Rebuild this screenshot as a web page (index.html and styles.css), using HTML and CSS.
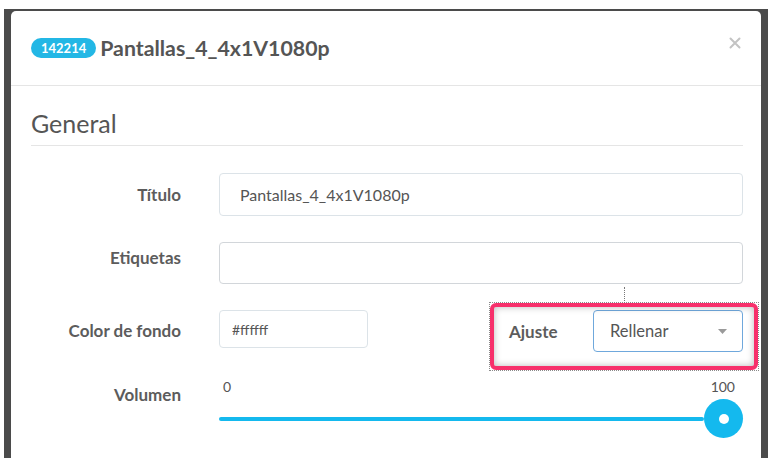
FILE: index.html
```html
<!doctype html>
<html lang="es">
  <head>
    <meta charset="UTF-8" />
    <meta name="viewport" content="width=device-width, initial-scale=1.0" />
    <title>Pantallas_4_4x1V1080p</title>
    <link rel="stylesheet" href="styles.css">
  </head>
  <body>
    <div class="Screen">
      <div class="Modal">
        <header class="Modal-header">
          <span class="Badge">142214</span>
          <h4 class="Modal-title">Pantallas_4_4x1V1080p</h4>
          <button class="Close" type="button" aria-label="Cerrar">
            <svg width="12" height="12" viewBox="0 0 12 12">
              <path d="M1.5 1.5 L10.5 10.5 M10.5 1.5 L1.5 10.5" stroke="#c3c3c3" stroke-width="2" stroke-linecap="round" fill="none" />
            </svg>
          </button>
        </header>

        <div class="Modal-body">
          <h3 class="Section-title">General</h3>

          <form class="Form">
            <div class="Field">
              <label class="Field-label">Título</label>
              <input class="Input" type="text" value="Pantallas_4_4x1V1080p" />
            </div>

            <div class="Field Field--top">
              <label class="Field-label">Etiquetas</label>
              <input class="Input Input--tags" type="text" value="" />
            </div>

            <div class="Field">
              <label class="Field-label">Color de fondo</label>
              <div class="Split">
                <input class="Input Input--color" type="text" value="#ffffff" />
                <div class="Fit">
                  <span class="Fit-label">Ajuste</span>
                  <div class="Select">
                    <span>Rellenar</span>
                    <svg width="9" height="5" viewBox="0 0 9 5">
                      <path d="M0 0 H9 L4.5 5 Z" fill="#9a9a9a" />
                    </svg>
                  </div>
                  <div class="Mark"><div class="Mark-frame"></div></div>
                </div>
              </div>
            </div>

            <div class="Field Field--slider">
              <label class="Field-label">Volumen</label>
              <div class="Slider">
                <div class="Slider-scale">
                  <span>0</span>
                  <span>100</span>
                </div>
                <div class="Slider-track">
                  <div class="Slider-fill"></div>
                  <div class="Slider-thumb"></div>
                </div>
              </div>
            </div>
          </form>
        </div>
      </div>
    </div>
  </body>
</html>
```

FILE: styles.css
```css
:root {
  --color-text: #555555;
  --color-label: #5c5c5c;
  --color-info: #23b7e5;
  --color-slider: #14b9ee;
  --color-line: #e5e5e5;
  --color-border: #dce3e8;
  --color-mark: #f7306b;
}

body {
  margin: 0;
  font-family: Lato, "Open Sans", sans-serif;
  color: var(--color-text);
  background-color: #fff;
}

.Screen {
  box-sizing: border-box;
  height: 449px;
  margin: 9px 6px 0 4px;
  padding: 2px 7px 0;
  overflow: hidden;
  background-color: #4b4b4b;
}

.Modal {
  height: 100%;
  border-radius: 5px 5px 0 0;
  background-color: #fff;
}

.Modal-header {
  display: flex;
  align-items: center;
  height: 74px;
  padding: 0 20px;
  border-bottom: 1px solid var(--color-line);
}

.Badge {
  padding: 0 10px;
  border-radius: 10px;
  font-size: 13px;
  font-weight: 700;
  line-height: 20px;
  color: #fff;
  background-color: var(--color-info);
}

.Modal-title {
  flex: 1;
  margin: 0 0 0 4px;
  font-size: 21.3px;
  font-weight: 700;
  color: var(--color-text);
}

.Close {
  align-self: flex-start;
  width: 12px;
  height: 12px;
  margin-top: 26px;
  padding: 0;
  border: 0;
  background: none;
}

.Close svg {
  display: block;
}

.Modal-body {
  padding: 23px 18px 0 20px;
}

.Section-title {
  margin: 0;
  padding-bottom: 7px;
  border-bottom: 1px solid var(--color-line);
  font-size: 25px;
  font-weight: 400;
  line-height: 29px;
}

.Form {
  display: flex;
  flex-direction: column;
  gap: 26px;
  margin-top: 27px;
}

.Field {
  display: grid;
  grid-template-columns: 150px 1fr;
  column-gap: 38px;
  align-items: center;
}

.Field-label {
  text-align: right;
  font-size: 17px;
  font-weight: 700;
  line-height: 20px;
  color: var(--color-label);
}

.Field--top,
.Field--slider {
  align-items: start;
}

.Field--top .Field-label {
  padding-top: 6px;
}

.Field--slider .Field-label {
  padding-top: 7px;
}

.Input {
  box-sizing: border-box;
  width: 100%;
  height: 43px;
  padding: 0 20px;
  border: 1px solid var(--color-border);
  border-radius: 4px;
  font-family: inherit;
  font-size: 16px;
  color: var(--color-text);
  background-color: #fff;
  outline: none;
}

.Input--tags {
  height: 42px;
  border-color: #d2d6da;
}

.Input--color {
  width: 149px;
  height: 38px;
  padding: 0 12px;
  font-size: 14px;
}

.Split {
  display: flex;
  justify-content: space-between;
  align-items: flex-start;
}

.Fit {
  position: relative;
  display: flex;
  align-items: center;
}

.Fit-label {
  width: 84px;
  font-size: 17px;
  font-weight: 700;
  color: var(--color-label);
}

.Select {
  box-sizing: border-box;
  display: flex;
  align-items: center;
  justify-content: space-between;
  width: 150px;
  height: 42px;
  padding: 0 15px 0 16px;
  border: 1px solid #6fa8dc;
  border-radius: 4px;
  font-size: 16.5px;
}

/* annotation frame drawn over the "Ajuste" group */
.Mark {
  position: absolute;
  top: -8px;
  right: -16px;
  bottom: -19px;
  left: -20px;
  border: 1px dotted #8a8a8a;
  pointer-events: none;
}

.Mark::before {
  content: "";
  position: absolute;
  bottom: 100%;
  left: 50%;
  height: 16px;
  border-left: 1px dotted #777;
}

.Mark-frame {
  position: absolute;
  inset: 0;
  border: 4px solid var(--color-mark);
  border-radius: 6px;
  box-shadow: inset 0 0 7px rgba(0, 0, 0, 0.28);
}

.Slider-scale {
  display: flex;
  justify-content: space-between;
  padding: 0 8px 0 4px;
  font-size: 14px;
  line-height: 18px;
}

.Slider-track {
  display: flex;
  align-items: center;
  height: 39px;
  margin-top: 3px;
}

.Slider-fill {
  flex: 1;
  height: 4px;
  border-radius: 2px;
  background-color: var(--color-slider);
}

.Slider-thumb {
  display: flex;
  align-items: center;
  justify-content: center;
  width: 39px;
  height: 39px;
  border-radius: 50%;
  background-color: var(--color-slider);
}

.Slider-thumb::after {
  content: "";
  width: 10px;
  height: 10px;
  border-radius: 50%;
  background-color: #fff;
}
```
